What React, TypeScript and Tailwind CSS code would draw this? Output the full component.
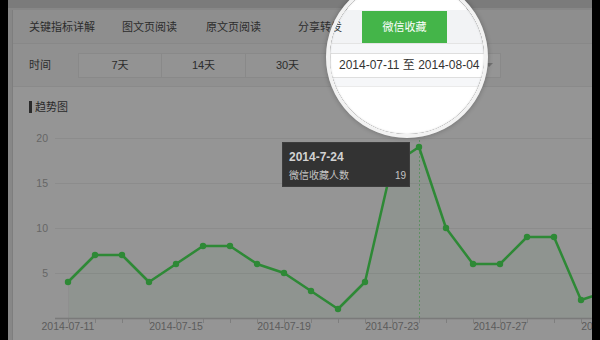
import React from "react";

const VALUES = [4, 7, 7, 4, 6, 8, 8, 6, 5, 3, 1, 4, 17, 19, 10, 6, 6, 9, 9, 2, 3];
const px = (i: number) => 68 + 27 * i;
const py = (v: number) => 318 - 9 * v;

function Chart() {
  const pts = VALUES.map((v, i) => `${px(i)},${py(v)}`).join(" ");
  const area = `${px(0)},318 ${pts} ${px(VALUES.length - 1)},318`;
  const grid = [
    { v: 20, y: 138 },
    { v: 15, y: 183 },
    { v: 10, y: 228 },
    { v: 5, y: 273 },
  ];
  const labels = [0, 4, 8, 12, 16, 20];
  const names = ["2014-07-11", "2014-07-15", "2014-07-19", "2014-07-23", "2014-07-27", "2014-07-31"];
  return (
    <svg width={579} height={226} className="block shrink-0">
      <g transform="translate(-13,-114)" fontFamily="'Liberation Sans', sans-serif">
        {grid.map((g) => (
          <g key={g.v}>
            <line x1={55} x2={592} y1={g.y + 0.5} y2={g.y + 0.5} stroke="#8c8c8c" strokeWidth={1} />
            <text x={48} y={g.y + 3.5} textAnchor="end" fontSize={10.5} fill="#666666">
              {g.v}
            </text>
          </g>
        ))}
        <polygon points={area} fill="#2e8936" opacity={0.05} />
        <line x1={68.5} x2={68.5} y1={282} y2={318} stroke="#8f8f8f" strokeWidth={1} />
        <line x1={419.5} x2={419.5} y1={140} y2={318} stroke="#5f8f63" strokeWidth={1} strokeDasharray="2 2" />
        <line x1={55} x2={592} y1={318.5} y2={318.5} stroke="#7a7a7a" strokeWidth={1.5} />
        {Array.from({ length: 21 }).map((_, i) => (
          <line key={i} x1={px(i) + 0.5} x2={px(i) + 0.5} y1={319} y2={323} stroke="#7e7e7e" strokeWidth={1} />
        ))}
        {labels.map((i, k) => (
          <text key={i} x={px(i)} y={330} textAnchor="middle" fontSize={10.5} fill="#5c5c5c">
            {names[k]}
          </text>
        ))}
        <polyline points={pts} fill="none" stroke="#2e8936" strokeWidth={2.5} strokeLinejoin="round" />
        {VALUES.map((v, i) => (
          <circle key={i} cx={px(i)} cy={py(v)} r={3.2} fill="#2e8936" />
        ))}
      </g>
    </svg>
  );
}

function Page({ lit }: { lit: boolean }) {
  return (
    <div className="w-[600px] h-[340px] bg-black px-2 flex flex-col font-['Liberation_Sans','Noto_Sans_CJK_SC',sans-serif]">
      <div className={lit ? "flex-1 flex flex-col bg-white" : "flex-1 flex flex-col bg-[#878787]"}>
        <div className={lit ? "h-2 shrink-0 bg-white" : "h-2 shrink-0 bg-[#7b7b7b]"} />
        <div className="flex-1 flex flex-col pl-1 pt-0.5 min-h-0">
          <div
            className={
              lit
                ? "flex-1 flex flex-col border-l border-[#e0e0e0] min-h-0"
                : "flex-1 flex flex-col border-l border-[#7e7e7e] min-h-0"
            }
          >
            {/* tabs */}
            <div
              className={
                lit
                  ? "h-[34px] shrink-0 flex items-end pl-4 bg-[#f2f3f5] border-b border-[#e4e4e4] text-[11px] text-[#333]"
                  : "h-[34px] shrink-0 flex items-end pl-4 bg-[#8e8e8e] border-b border-[#888888] text-[11px] text-[#2c2c2c]"
              }
            >
              <div className="w-[93px] h-[32px] flex items-center">关键指标详解</div>
              <div className="w-[84px] h-[32px] flex items-center">图文页阅读</div>
              <div className="w-[92px] h-[32px] flex items-center">原文页阅读</div>
              <div className="w-[64px] h-[32px] flex items-center">分享转发</div>
              <div
                className={
                  lit
                    ? "w-[85px] h-[32px] flex items-center justify-center bg-[#44b549] text-white"
                    : "w-[85px] h-[32px] flex items-center justify-center bg-[#27692a] text-[#8e8e8e]"
                }
              >
                微信收藏
              </div>
            </div>
            {/* filter */}
            <div
              className={
                lit
                  ? "h-[43px] shrink-0 flex items-center pl-4 bg-[#f6f7f9] border-b border-[#ebebeb] text-[11px] text-[#333]"
                  : "h-[43px] shrink-0 flex items-center pl-4 bg-[#909090] border-b border-[#8a8a8a] text-[11px] text-[#2c2c2c]"
              }
            >
              <div className="w-[49px]">时间</div>
              <div
                className={
                  lit
                    ? "flex h-[25px] border border-[#e2e2e2] bg-[#fbfbfb]"
                    : "flex h-[25px] border border-[#898989] bg-[#939393]"
                }
              >
                <div className={lit ? "w-[83px] flex items-center justify-center border-r border-[#e2e2e2]" : "w-[83px] flex items-center justify-center border-r border-[#898989]"}>
                  7天
                </div>
                <div className={lit ? "w-[84px] flex items-center justify-center border-r border-[#e2e2e2]" : "w-[84px] flex items-center justify-center border-r border-[#898989]"}>
                  14天
                </div>
                <div className="w-[83px] flex items-center justify-center">30天</div>
              </div>
              <div
                className={
                  lit
                    ? "w-[171px] h-[25px] flex items-center justify-between pl-2 pr-[7px] bg-white border border-[#dedede] text-[12px] text-[#333]"
                    : "w-[171px] h-[25px] flex items-center justify-between pl-2 pr-[7px] bg-[#959595] border border-[#898989] text-[12px] text-[#2c2c2c]"
                }
              >
                <span>2014-07-11 至 2014-08-04</span>
                <span
                  className={
                    lit
                      ? "w-0 h-0 border-x-[4px] border-x-transparent border-t-[4px] border-t-[#b0b0b0]"
                      : "w-0 h-0 border-x-[4px] border-x-transparent border-t-[4px] border-t-[#6f6f6f]"
                  }
                />
              </div>
            </div>
            {/* chart */}
            <div className={lit ? "flex-1 flex flex-col bg-white overflow-hidden min-h-0" : "flex-1 flex flex-col bg-[#959595] overflow-hidden min-h-0"}>
              <div className="mt-[13px] h-[14px] shrink-0 pl-4 flex items-center text-[11px]">
                <span className={lit ? "w-[3px] h-[12px] bg-[#333]" : "w-[3px] h-[12px] bg-[#2a2a2a]"} />
                <span className={lit ? "ml-[3px] text-[#333]" : "ml-[3px] text-[#2a2a2a]"}>趋势图</span>
              </div>
              <Chart />
            </div>
          </div>
        </div>
      </div>
    </div>
  );
}

export default function App() {
  return (
    <div className="relative w-[600px] h-[340px] overflow-hidden bg-black">
      <Page lit={false} />
      {/* tooltip */}
      <div className="absolute left-[282px] top-[142px] w-[128px] h-[45px] bg-[#333333] border border-[#3d3d3d] pl-[6px] pr-[3px] pt-[7px] font-['Liberation_Sans','Noto_Sans_CJK_SC',sans-serif]">
        <div className="text-[12px] leading-[15px] font-bold text-[#d2d2d2]">2014-7-24</div>
        <div className="mt-[4px] flex justify-between text-[10px] leading-[14px] text-[#c4c4c4]">
          <span>微信收藏人数</span>
          <span>19</span>
        </div>
      </div>
      {/* magnifier */}
      <div className="absolute left-[326px] top-[-24px] w-[162px] h-[162px] rounded-full overflow-hidden border-[4px] border-[#f2f2f2] shadow-[0_0_4px_1px_rgba(0,0,0,0.18)]">
        <div className="absolute left-[-330px] top-[20px]">
          <Page lit={true} />
        </div>
      </div>
      <div className="absolute left-[330px] top-[-20px] w-[154px] h-[154px] rounded-full shadow-[inset_0_0_2px_rgba(0,0,0,0.15)] pointer-events-none" />
    </div>
  );
}
